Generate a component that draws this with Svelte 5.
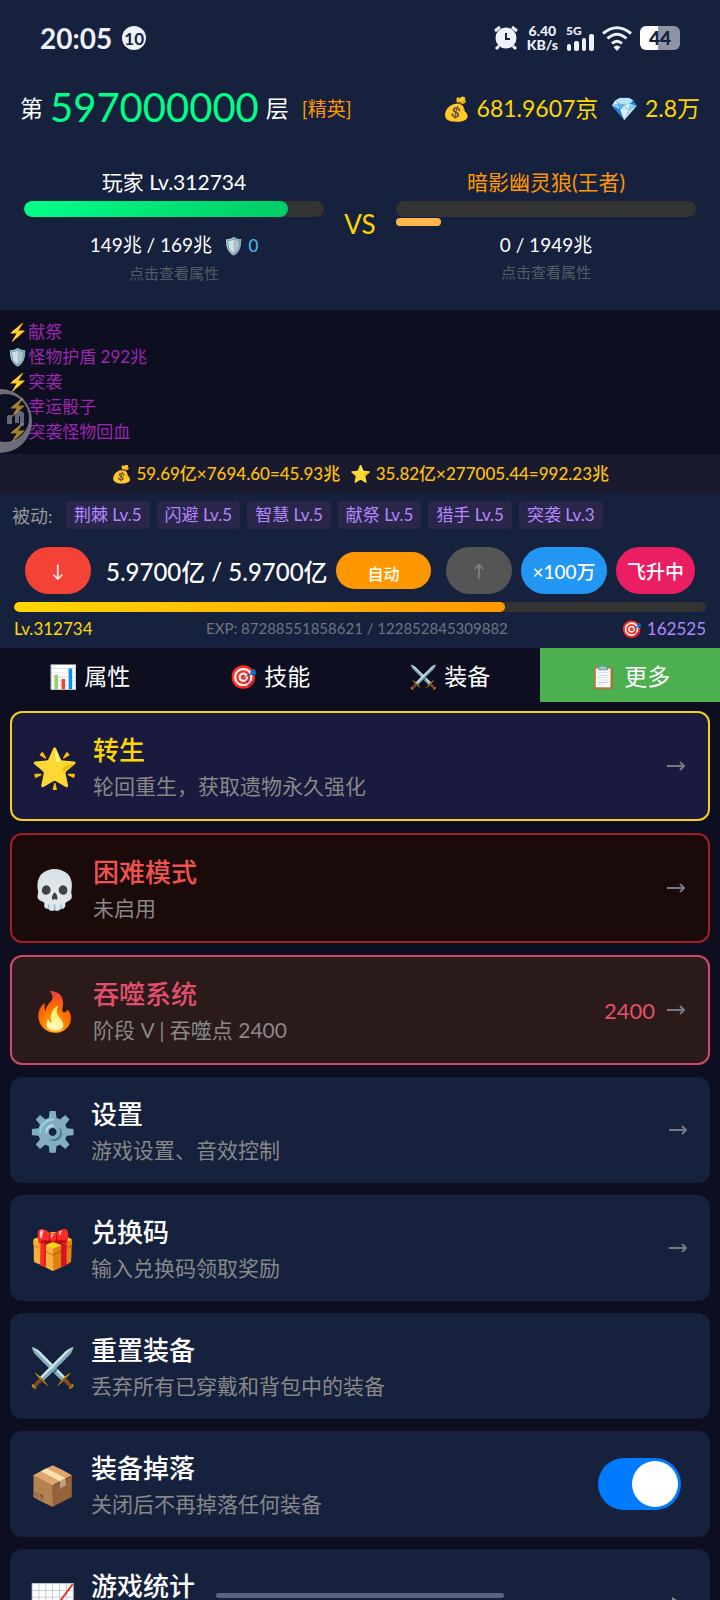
<script lang="ts">
	type MenuItem = {
		icon: string;
		title: string;
		desc: string;
		tone?: string;
		value?: string;
		end: 'arrow' | 'toggle' | 'caret' | 'none';
	};

	const logs = [
		{ icon: '⚡', text: '献祭' },
		{ icon: '🛡️', text: '怪物护盾 292兆' },
		{ icon: '⚡', text: '突袭' },
		{ icon: '⚡', text: '幸运骰子' },
		{ icon: '⚡', text: '突袭怪物回血' }
	];

	const passives = ['荆棘 Lv.5', '闪避 Lv.5', '智慧 Lv.5', '献祭 Lv.5', '猎手 Lv.5', '突袭 Lv.3'];

	const tabs = [
		{ icon: '📊', label: '属性' },
		{ icon: '🎯', label: '技能' },
		{ icon: '⚔️', label: '装备' },
		{ icon: '📋', label: '更多' }
	];

	const menu: MenuItem[] = [
		{ icon: '🌟', title: '转生', desc: '轮回重生，获取遗物永久强化', tone: 'gold', end: 'arrow' },
		{ icon: '💀', title: '困难模式', desc: '未启用', tone: 'hard', end: 'arrow' },
		{ icon: '🔥', title: '吞噬系统', desc: '阶段 V | 吞噬点 2400', tone: 'devour', value: '2400', end: 'arrow' },
		{ icon: '⚙️', title: '设置', desc: '游戏设置、音效控制', end: 'arrow' },
		{ icon: '🎁', title: '兑换码', desc: '输入兑换码领取奖励', end: 'arrow' },
		{ icon: '⚔️', title: '重置装备', desc: '丢弃所有已穿戴和背包中的装备', end: 'none' },
		{ icon: '📦', title: '装备掉落', desc: '关闭后不再掉落任何装备', end: 'toggle' },
		{ icon: '📈', title: '游戏统计', desc: '查看游戏数据统计', end: 'caret' }
	];

	let activeTab = $state(3);
	let dropEnabled = $state(true);

	const playerHp = 88;
	const enemyHp = 0;
	const enemyShield = 15;
	const exp = 71;
</script>

{#snippet body(item: MenuItem)}
	<span class="menu-icon">{item.icon}</span>
	<span class="menu-text">
		<span class="menu-title">{item.title}</span>
		<span class="menu-desc">{item.desc}</span>
	</span>
	{#if item.value}
		<span class="menu-value">{item.value}</span>
	{/if}
	{#if item.end === 'arrow'}
		<svg class="arrow" viewBox="0 0 18 12" aria-hidden="true">
			<path d="M0 6h17M13 2l4 4-4 4" />
		</svg>
	{:else if item.end === 'caret'}
		<svg class="caret" viewBox="0 0 10 12" aria-hidden="true"><path d="M0 0l10 6-10 6z" /></svg>
	{/if}
{/snippet}

<div class="game">
	<div class="status-bar">
		<span class="clock">20:05</span>
		<span class="notify">10</span>
		<div class="status-icons">
			<svg width="26" height="26" viewBox="0 0 26 26" aria-hidden="true">
				<path d="M2 6l5-4M24 6l-5-4M6 21l-3 3M20 21l3 3" class="stroke" />
				<circle cx="13" cy="13" r="10.5" class="fill" />
				<path d="M13 8v6h4" class="cut" />
			</svg>
			<span class="speed">6.40<br />KB/s</span>
			<span class="signal">
				<span class="net">5G</span>
				<svg width="28" height="25" viewBox="0 0 28 25" aria-hidden="true">
					<rect x="1" y="18" width="4" height="7" rx="2" class="fill" />
					<rect x="8" y="15" width="5" height="10" rx="2" class="fill" />
					<rect x="16" y="12" width="4" height="13" rx="2" class="fill" />
					<rect x="23" y="8" width="5" height="17" rx="2" class="fill" />
				</svg>
			</span>
			<svg width="30" height="25" viewBox="0 0 30 25" aria-hidden="true">
				<path d="M1 7.500Q15-4 29 7.500M5.500 12.500Q15 4 24.500 12.500M10 17.500Q15 13 20 17.500" class="stroke" />
				<path d="M15 25l-3.500-4Q15 18 18.500 21z" class="fill" />
			</svg>
			<span class="battery">44</span>
		</div>
	</div>

	<header class="stage">
		<div class="floor-name">
			<span>第</span>
			<strong>597000000</strong>
			<span>层</span>
			<em>[精英]</em>
		</div>
		<div class="wallet">
			<span>💰 681.9607京</span>
			<span>💎 2.8万</span>
		</div>
	</header>

	<section class="battle">
		<div class="fighter">
			<div class="name">玩家 Lv.312734</div>
			<div class="hp"><div class="hp-fill" style="width: {playerHp}%"></div></div>
			<div class="shield"></div>
			<div class="hp-text">149兆 / 169兆 <span class="armor">🛡️ 0</span></div>
			<div class="hint">点击查看属性</div>
		</div>
		<div class="vs">VS</div>
		<div class="fighter enemy">
			<div class="name">暗影幽灵狼(王者)</div>
			<div class="hp"><div class="hp-fill" style="width: {enemyHp}%"></div></div>
			<div class="shield"><div class="shield-fill" style="width: {enemyShield}%"></div></div>
			<div class="hp-text">0 / 1949兆</div>
			<div class="hint">点击查看属性</div>
		</div>
	</section>

	<section class="log">
		{#each logs as entry}
			<div class="log-line">{entry.icon}{entry.text}</div>
		{/each}
		<div class="floater" aria-hidden="true">
			<svg width="33" height="64" viewBox="0 0 33 64">
				<path
					d="M0 0a32 32 0 0 1 0 64v-12a24 24 0 0 0 5 1 24 24 0 0 0 0-48 24 24 0 0 0-5 1z"
					class="ring"
				/>
				<circle cx="5" cy="29" r="24" class="disc" />
				<path d="M7 35v-7q0-2 2-2h3v9zM15 22h5q4 0 4 4v11h-4v-9q0-1-1-1v7h-4z" class="mark" />
			</svg>
		</div>
	</section>

	<div class="drops">
		<span>💰 59.69亿×7694.60=45.93兆</span>
		<span>⭐ 35.82亿×277005.44=992.23兆</span>
	</div>

	<section class="panel">
		<div class="passives">
			<span class="passives-label">被动:</span>
			{#each passives as passive}
				<span class="chip">{passive}</span>
			{/each}
		</div>

		<div class="controls">
			<button class="pill down" aria-label="下一层">↓</button>
			<div class="floors">
				<span>5.9700亿 / 5.9700亿</span>
				<button class="auto">自动</button>
			</div>
			<button class="pill up" aria-label="上一层" disabled>↑</button>
			<button class="pill multi">×100万</button>
			<button class="pill ascend">飞升中</button>
		</div>

		<div class="exp">
			<div class="exp-bar"><div class="exp-fill" style="width: {exp}%"></div></div>
			<div class="exp-info">
				<span class="level">Lv.312734</span>
				<span class="exp-text">EXP: 87288551858621 / 122852845309882</span>
				<span class="points">🎯 162525</span>
			</div>
		</div>
	</section>

	<nav class="tabs">
		{#each tabs as tab, i}
			<button class:active={activeTab === i} onclick={() => (activeTab = i)}>
				{tab.icon} {tab.label}
			</button>
		{/each}
	</nav>

	<main class="menu">
		{#each menu as item}
			{#if item.end === 'toggle'}
				<label class="card">
					{@render body(item)}
					<input class="toggle" type="checkbox" role="switch" bind:checked={dropEnabled} />
				</label>
			{:else}
				<button class="card {item.tone ?? ''}">
					{@render body(item)}
				</button>
			{/if}
		{/each}
	</main>

	<div class="home-bar"></div>
</div>

<style>
	:global(body) {
		background: #0d0e20;
	}

	.game {
		position: relative;
		display: flex;
		flex-direction: column;
		height: 100vh;
		overflow: hidden;
		background: #0d0e20;
		color: #fff;
		font-family: Lato, 'Noto Sans CJK SC', 'Noto Color Emoji', sans-serif;
	}

	button {
		margin: 0;
		padding: 0;
		border: 0;
		color: inherit;
		font: inherit;
		cursor: pointer;
	}

	.status-bar,
	.stage,
	.battle {
		background: #16213e;
	}

	/* status bar */
	.status-bar {
		display: flex;
		align-items: center;
		gap: 10px;
		height: 76px;
		padding: 0 40px;
		color: #eef0fa;
	}

	.clock {
		font-size: 28px;
		font-weight: 700;
	}

	.notify {
		display: grid;
		place-items: center;
		width: 24px;
		height: 24px;
		border-radius: 50%;
		background: #eef0fa;
		color: #16213e;
		font-size: 17px;
		font-weight: 700;
	}

	.status-icons {
		display: flex;
		align-items: center;
		gap: 8px;
		margin-left: auto;
	}

	.speed {
		font-size: 14px;
		font-weight: 900;
		line-height: 14px;
		text-align: center;
	}

	.signal {
		position: relative;
		display: flex;
	}

	.net {
		position: absolute;
		top: 0;
		left: 0;
		font-size: 12px;
		font-weight: 900;
		line-height: 10px;
	}

	.fill {
		fill: #eef0fa;
	}

	.stroke {
		fill: none;
		stroke: #eef0fa;
		stroke-width: 3;
	}

	.cut {
		fill: none;
		stroke: #16213e;
		stroke-width: 2;
	}

	.battery {
		width: 40px;
		border-radius: 6px;
		background: linear-gradient(90deg, #fff 44%, #8f94a5 44%);
		color: #16213e;
		font-size: 19px;
		font-weight: 900;
		line-height: 24px;
		text-align: center;
	}

	/* header */
	.stage {
		display: flex;
		align-items: center;
		justify-content: space-between;
		height: 62px;
		padding: 0 20px;
	}

	.floor-name {
		display: flex;
		align-items: center;
		gap: 7px;
		font-size: 23px;
	}

	.floor-name strong {
		color: #00ff88;
		font-size: 40px;
		font-weight: 400;
	}

	.floor-name em {
		margin-left: 6px;
		color: #ff9800;
		font-size: 19px;
		font-style: normal;
	}

	.wallet {
		display: flex;
		gap: 12px;
		color: #ffd700;
		font-size: 23px;
	}

	/* battle */
	.battle {
		display: flex;
		align-items: center;
		gap: 20px;
		height: 172px;
		padding: 0 24px;
	}

	.fighter {
		flex: 1;
		text-align: center;
	}

	.name {
		font-size: 21px;
		line-height: 38px;
	}

	.enemy .name {
		color: #ff9800;
	}

	.hp {
		height: 16px;
		overflow: hidden;
		border-radius: 8px;
		background: #333;
	}

	.hp-fill {
		height: 100%;
		border-radius: 8px;
		background: linear-gradient(90deg, #00ff88, #00cc66);
	}

	.shield {
		height: 8px;
		margin: 1px 0 5px;
	}

	.shield-fill {
		height: 100%;
		border-radius: 4px;
		background: #ffb74d;
	}

	.hp-text {
		font-size: 19px;
		line-height: 28px;
	}

	.armor {
		margin-left: 6px;
		color: #4fc3f7;
		font-size: 17px;
	}

	.hint {
		color: #555b66;
		font-size: 15px;
		line-height: 26px;
	}

	.vs {
		width: 32px;
		color: #ffd700;
		font-size: 26px;
		text-align: center;
	}

	/* log */
	.log {
		position: relative;
		height: 144px;
		box-sizing: border-box;
		padding: 9px 7px 0;
		color: #9c27b0;
		font-size: 17px;
		line-height: 25px;
	}

	.floater {
		position: absolute;
		top: 79px;
		left: 0;
	}

	.ring {
		fill: #8c8d96;
		fill-opacity: 0.75;
	}

	.disc {
		fill: #10142c;
		fill-opacity: 0.4;
	}

	.mark {
		fill: #8c8d96;
		fill-opacity: 0.7;
	}

	.drops {
		display: flex;
		justify-content: center;
		gap: 10px;
		background: #1a1a2e;
		color: #ffc107;
		font-size: 17px;
		font-weight: 500;
		line-height: 39px;
	}

	/* panel */
	.panel {
		background: #16213e;
	}

	.passives {
		display: flex;
		align-items: center;
		gap: 7px;
		height: 28px;
		padding: 8px 12px 0;
		font-size: 17px;
		white-space: nowrap;
	}

	.passives-label {
		width: 47px;
		color: #999;
		font-size: 18px;
	}

	.chip {
		padding: 0 8px;
		border-radius: 4px;
		background: #29264a;
		color: #b388ff;
		line-height: 28px;
	}

	.controls {
		display: flex;
		align-items: center;
		gap: 9px;
		padding: 18px 25px 8px;
	}

	.pill {
		height: 47px;
		border-radius: 24px;
		font-size: 19px;
		font-weight: 500;
	}

	.down,
	.up {
		width: 66px;
		font-size: 17px;
		font-weight: 400;
	}

	.down {
		background: #f44336;
	}

	.up {
		background: #555;
		color: #888;
	}

	.multi {
		width: 86px;
		background: #2196f3;
	}

	.ascend {
		width: 79px;
		background: #e91e63;
	}

	.floors {
		display: flex;
		flex: 1;
		align-items: center;
		justify-content: space-between;
		padding: 0 6px;
		font-size: 24px;
		font-weight: 500;
		white-space: nowrap;
	}

	.auto {
		width: 95px;
		height: 37px;
		padding-top: 4px;
		border-radius: 19px;
		background: #ff9800;
		font-size: 16px;
	}

	.exp {
		padding: 0 14px;
	}

	.exp-bar {
		height: 10px;
		overflow: hidden;
		border-radius: 5px;
		background: #333;
	}

	.exp-fill {
		height: 100%;
		border-radius: 5px;
		background: linear-gradient(90deg, #ffd700, #ff9800);
	}

	.exp-info {
		display: flex;
		align-items: center;
		justify-content: space-between;
		height: 32px;
		padding-bottom: 4px;
		font-size: 17px;
	}

	.level {
		color: #ffd700;
	}

	.exp-text {
		color: #6f7480;
		font-size: 15px;
	}

	.points {
		color: #b388ff;
	}

	/* tabs */
	.tabs {
		display: grid;
		grid-template-columns: repeat(4, 1fr);
	}

	.tabs button {
		height: 54px;
		background: transparent;
		font-size: 23px;
	}

	.tabs .active {
		background: #4caf50;
	}

	/* menu */
	.menu {
		display: flex;
		flex: 1;
		flex-direction: column;
		gap: 12px;
		min-height: 0;
		padding: 9px 10px 0;
		overflow: hidden;
	}

	.card {
		display: flex;
		flex-shrink: 0;
		align-items: center;
		height: 106px;
		box-sizing: border-box;
		padding: 0 20px 0 19px;
		border-radius: 12px;
		background: #16213e;
		text-align: left;
	}

	.gold,
	.hard,
	.devour {
		height: 110px;
		border: 2px solid;
	}

	.gold {
		border-color: #f5d020;
		background: #1a1a3e;
	}

	.hard {
		border-color: #a31f24;
		background: #1a0a0a;
	}

	.devour {
		border-color: #d2486a;
		background: #2a1a1a;
	}

	.menu-icon {
		width: 62px;
		font-size: 38px;
		line-height: 46px;
	}

	.menu-text {
		display: flex;
		flex: 1;
		flex-direction: column;
		padding-top: 2px;
	}

	.menu-title {
		font-size: 26px;
		font-weight: 500;
		line-height: 37px;
	}

	.gold .menu-title {
		color: #ffd700;
	}

	.hard .menu-title {
		color: #ef5350;
	}

	.devour .menu-title,
	.menu-value {
		color: #e0506c;
	}

	.menu-desc {
		color: #888;
		font-size: 21px;
		line-height: 34px;
	}

	.menu-value {
		margin-right: 12px;
		font-size: 22px;
	}

	.arrow {
		width: 18px;
		margin-right: 3px;
		fill: none;
		stroke: #777984;
		stroke-width: 2;
	}

	.caret {
		width: 8px;
		margin-right: 10px;
		fill: #888;
	}

	.toggle {
		width: 83px;
		height: 52px;
		margin: 0 9px 0 0;
		padding: 3px;
		box-sizing: border-box;
		border-radius: 26px;
		background: #555;
		appearance: none;
		cursor: pointer;
	}

	.toggle::before {
		content: '';
		display: block;
		width: 46px;
		height: 46px;
		border-radius: 50%;
		background: #fff;
	}

	.toggle:checked {
		background: #007aff;
	}

	.toggle:checked::before {
		margin-left: auto;
	}

	.home-bar {
		position: absolute;
		bottom: 2px;
		left: 30%;
		width: 40%;
		height: 5px;
		border-radius: 3px;
		background: #5c637f;
	}
</style>
